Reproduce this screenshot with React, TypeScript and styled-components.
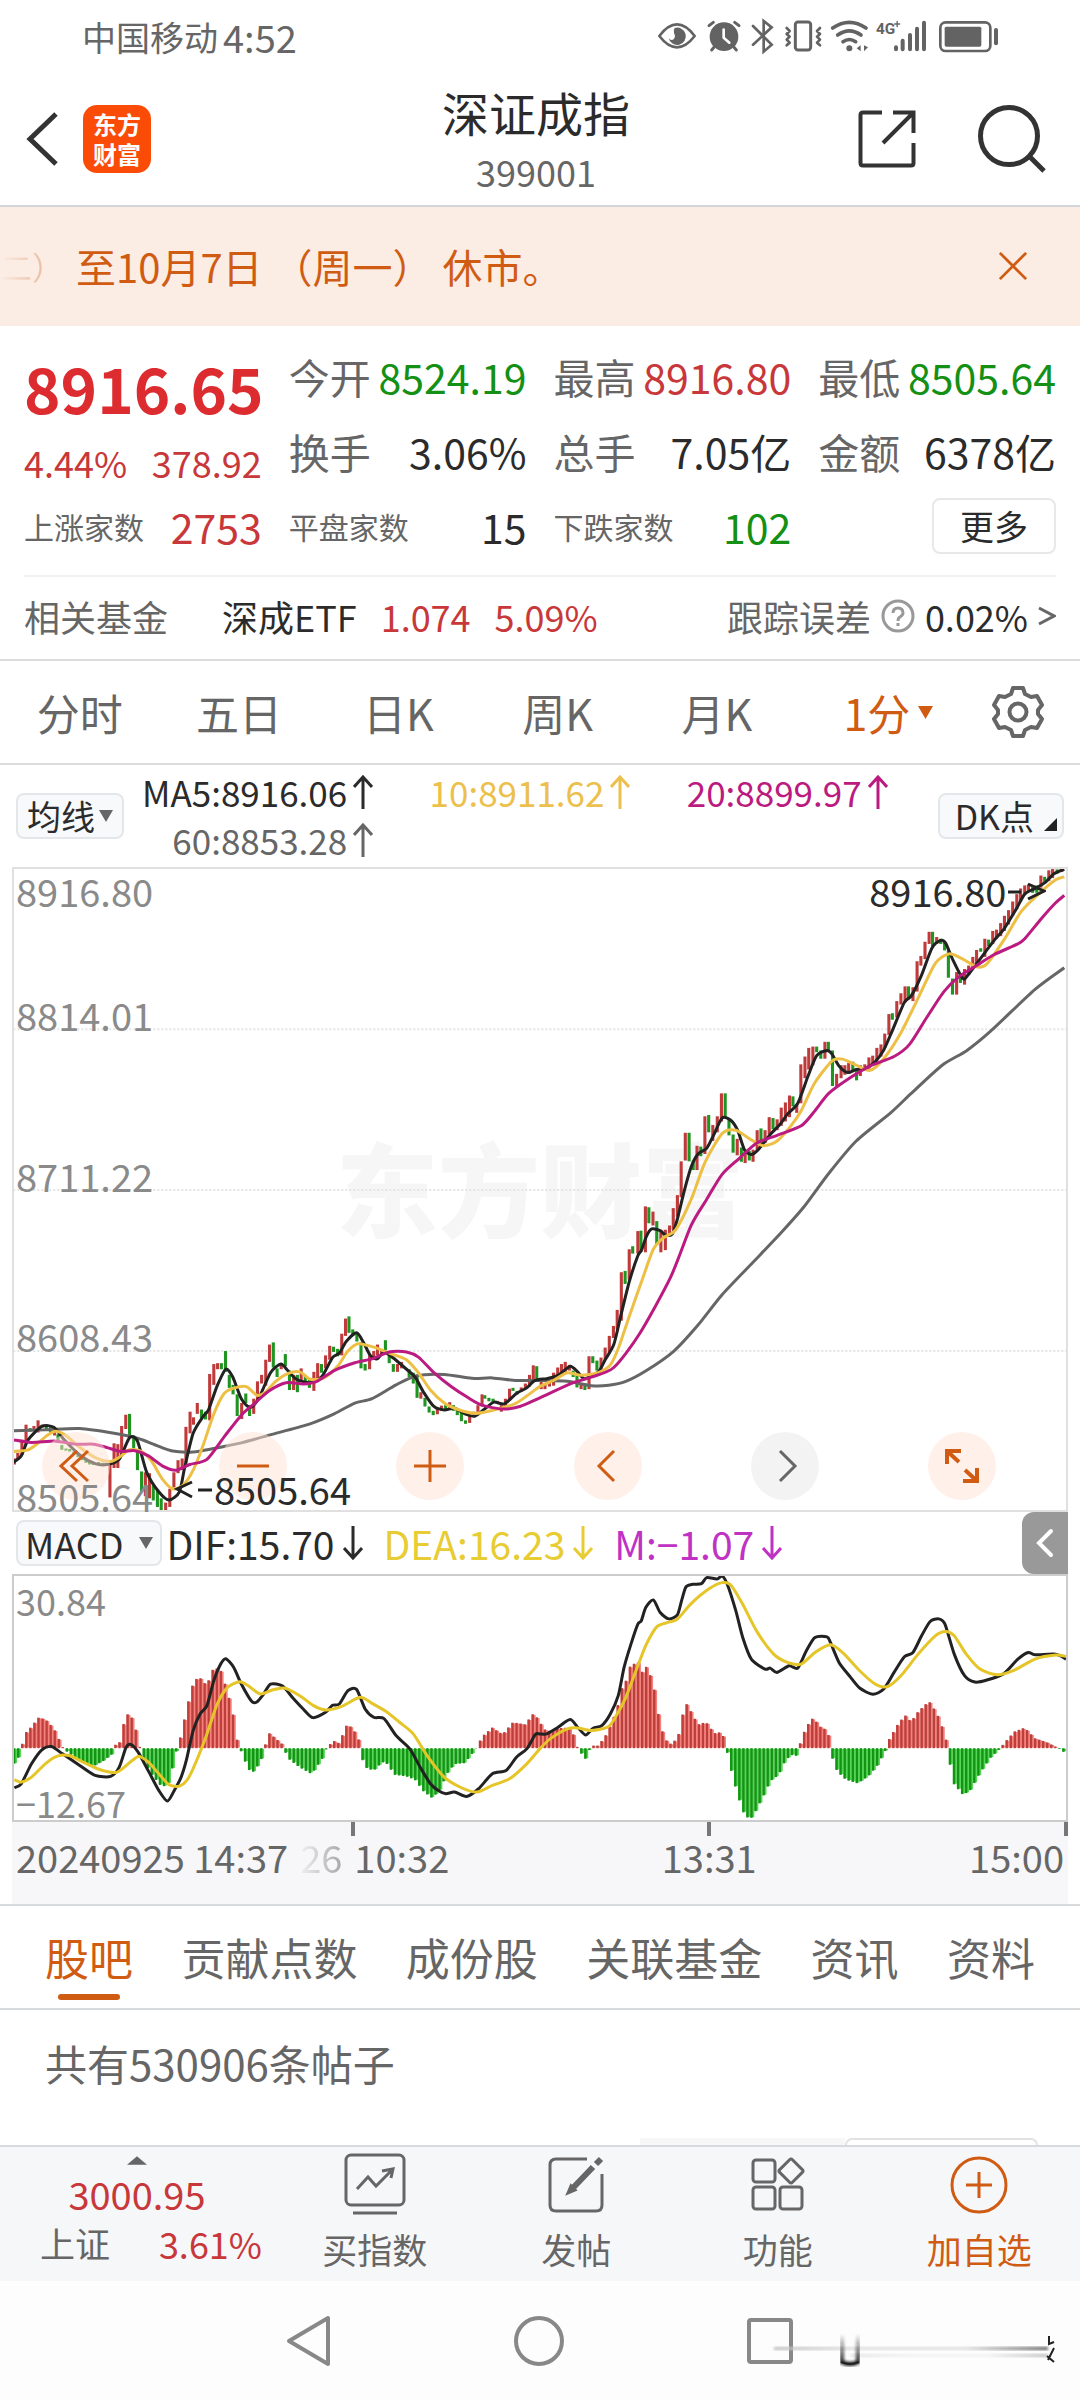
import React from 'react';
import styled, { createGlobalStyle } from 'styled-components';

const GREY = '#666';
const INK = '#2b2b2b';
const RED = '#c8373a';
const GREEN = '#149014';
const ORANGE = '#d05c14';

const GlobalStyle = createGlobalStyle`
  * { box-sizing: border-box; }
  body {
    margin: 0;
    background: #fff;
    color: ${INK};
    font-family: "Noto Sans CJK SC", "Noto Sans", sans-serif;
  }
  button {
    margin: 0;
    padding: 0;
    border: 0;
    background: none;
    color: inherit;
    font: inherit;
    cursor: pointer;
  }
  svg { display: block; }
`;

const Page = styled.div`
  display: flex;
  flex-direction: column;
  min-height: 100vh;
  overflow: hidden;
`;

/* ---------- status bar and header ---------- */

const StatusBar = styled.div`
  display: flex;
  align-items: center;
  justify-content: space-between;
  height: 76px;
  padding: 4px 60px 0 82px;
  color: ${GREY};
`;

const Carrier = styled.div`
  display: flex;
  align-items: center;
  gap: 5px;
  padding-bottom: 8px;
  font-size: 34px;
`;

const Clock = styled.span`
  font-size: 38px;
`;

const Header = styled.header`
  display: grid;
  grid-template-columns: 1fr auto 1fr;
  align-items: center;
  height: 131px;
  padding: 0 34px 4px 26px;
  border-bottom: 2px solid #d2d6da;
`;

const HeaderSide = styled.div<{ $end?: boolean }>`
  display: flex;
  align-items: center;
  justify-content: ${(p) => (p.$end ? 'flex-end' : 'flex-start')};
  gap: ${(p) => (p.$end ? '62px' : '24px')};
`;

const Logo = styled.a`
  display: grid;
  place-content: center;
  width: 68px;
  height: 68px;
  border-radius: 14px;
  background: #fb4c07;
  color: #fff;
  font-size: 24px;
  font-weight: 700;
  line-height: 30px;
  text-align: center;
  text-decoration: none;
`;

const TitleBlock = styled.div`
  text-align: center;
`;

const Title = styled.h1`
  margin: 0;
  font-size: 47px;
  font-weight: 400;
  line-height: 64px;
`;

const Code = styled.div`
  color: ${GREY};
  font-size: 36px;
  line-height: 54px;
`;

const Banner = styled.div`
  display: flex;
  align-items: center;
  justify-content: space-between;
  height: 119px;
  padding: 0 52px 2px 0;
  background: #fbede4;
  color: ${ORANGE};
`;

const Notice = styled.p`
  display: flex;
  gap: 10px;
  margin: 0;
  font-size: 40px;
  line-height: 60px;
  white-space: nowrap;
`;

const Fading = styled.span`
  width: 66px;
  background: linear-gradient(90deg, #fbede4, #e0a684);
  background-clip: text;
  -webkit-background-clip: text;
  color: transparent;
  font-size: 32px;
`;

/* ---------- quote ---------- */

const Quote = styled.section`
  padding: 12px 24px 0;
`;

const QuoteGrid = styled.div`
  display: grid;
  grid-template-columns: repeat(4, minmax(0, 1fr));
  grid-auto-rows: 75px;
  column-gap: 27px;
`;

const PriceCell = styled.div`
  grid-row: span 2;
  color: ${RED};
`;

const Price = styled.div`
  color: #dc2c2f;
  font-size: 62px;
  font-weight: 700;
  line-height: 98px;
`;

const Change = styled.div`
  display: flex;
  justify-content: space-between;
  font-size: 36px;
  line-height: 52px;
`;

const Cell = styled.div<{ $tone?: string }>`
  display: flex;
  align-items: center;
  justify-content: space-between;
  font-size: 41px;
  white-space: nowrap;
  color: ${(p) => p.$tone || INK};
`;

const CellLabel = styled.span<{ $small?: boolean }>`
  color: ${GREY};
  font-size: ${(p) => (p.$small ? '30px' : '41px')};
`;

const MoreButton = styled.button`
  width: 124px;
  height: 56px;
  margin-left: auto;
  border: 2px solid #e8e8e8;
  border-radius: 8px;
  font-size: 34px;
  line-height: 48px;
`;

const FundRow = styled.div`
  display: flex;
  align-items: center;
  height: 84px;
  margin-top: 12px;
  padding-bottom: 4px;
  border-top: 2px solid #f1f1f1;
  font-size: 36px;
  white-space: nowrap;
`;

const FundLabel = styled.span`
  color: ${GREY};
`;

const FundLink = styled.a`
  display: flex;
  gap: 24px;
  margin-left: 54px;
  color: ${INK};
  text-decoration: none;
`;

const RedText = styled.span`
  color: ${RED};
`;

const Tracking = styled.div`
  display: flex;
  align-items: center;
  gap: 10px;
  margin-left: auto;
`;

/* ---------- period tabs ---------- */

const PeriodBar = styled.nav`
  display: grid;
  grid-template-columns: repeat(6, 1fr) 124px;
  align-items: center;
  height: 106px;
  border-top: 2px solid #dcdcdc;
  border-bottom: 2px solid #dcdcdc;
`;

const PeriodTab = styled.button<{ $active?: boolean }>`
  display: flex;
  align-items: center;
  justify-content: center;
  gap: 8px;
  padding-left: ${(p) => (p.$active ? '24px' : '0')};
  color: ${(p) => (p.$active ? ORANGE : GREY)};
  font-size: 43px;
  line-height: 64px;
`;

const IconButton = styled.button`
  display: grid;
  place-items: center;
`;

/* ---------- indicators ---------- */

const AverageBar = styled.div`
  display: flex;
  align-items: center;
  justify-content: space-between;
  height: 102px;
  padding: 0 16px;
`;

const Chip = styled.button<{ $wide?: boolean }>`
  display: flex;
  align-items: center;
  justify-content: center;
  gap: ${(p) => (p.$wide ? '16px' : '4px')};
  height: 46px;
  padding: 0 ${(p) => (p.$wide ? '7px' : '9px')};
  border: 2px solid #e4e7ea;
  border-radius: 8px;
  background: #f7f9fa;
  font-size: ${(p) => (p.$wide ? '36px' : '34px')};
  line-height: 42px;
  white-space: nowrap;
`;

const CornerChip = styled(Chip)`
  gap: 10px;
  padding: 0 5px 0 15px;
  svg { align-self: flex-end; margin-bottom: 6px; }
`;

const Averages = styled.div`
  display: grid;
  grid-template-columns: repeat(3, 1fr);
  flex: 1;
  margin: 0 50px 0 -8px;
`;

const Reading = styled.span<{ $tone: string }>`
  display: flex;
  align-items: center;
  justify-content: flex-end;
  gap: 6px;
  color: ${(p) => p.$tone};
  font-size: 35px;
  line-height: 48px;
  white-space: nowrap;
`;

const MacdBar = styled.div`
  display: flex;
  align-items: center;
  gap: 4px;
  height: 62px;
  padding-left: 16px;
  margin-right: 12px;
`;

const MacdReadings = styled.div`
  display: flex;
  gap: 21px;
`;

const MacdReading = styled(Reading)`
  gap: 8px;
  font-size: 39px;
`;

const Drawer = styled.button`
  display: grid;
  place-items: center;
  width: 46px;
  height: 62px;
  margin-left: auto;
  border-radius: 12px 0 0 12px;
  background: #999;
`;

/* ---------- charts ---------- */

const Plot = styled.div<{ $height: number; $line: string }>`
  position: relative;
  height: ${(p) => p.$height}px;
  margin: 0 12px;
  border: 2px solid ${(p) => p.$line};
  & > svg { position: relative; width: 100%; height: 100%; }
`;

const Watermark = styled.div`
  position: absolute;
  inset: 0;
  display: grid;
  place-items: center;
  padding-bottom: 8px;
  color: #f6f6f6;
  font-size: 102px;
  font-weight: 900;
`;

const Scale = styled.div`
  position: absolute;
  inset: 0;
  display: grid;
  grid-template-rows: repeat(4, 1fr);
  padding-left: 2px;
  color: #8a8a8a;
  font-size: 38px;
  line-height: 28px;
`;

const ScaleMark = styled.span<{ $row: number }>`
  grid-row: ${(p) => Math.max(p.$row, 1)};
  grid-column: 1;
  align-self: ${(p) => (p.$row ? 'end' : 'start')};
  padding-top: ${(p) => (p.$row ? '0' : '8px')};
`;

const MacdScale = styled(Scale)`
  display: flex;
  flex-direction: column;
  justify-content: space-between;
  padding: 6px 0 0 2px;
  font-size: 36px;
  line-height: 36px;
`;

const Callout = styled.div<{ $x: string; $y: string }>`
  position: absolute;
  left: ${(p) => p.$x};
  top: ${(p) => p.$y};
  display: flex;
  align-items: center;
  color: ${INK};
  font-size: 38px;
  line-height: 40px;
`;

const Controls = styled.div`
  position: absolute;
  left: 28px;
  right: 70px;
  bottom: 10px;
  display: flex;
  justify-content: space-between;
`;

const RoundButton = styled.button<{ $muted?: boolean }>`
  display: grid;
  place-items: center;
  width: 68px;
  height: 68px;
  border-radius: 50%;
  background: ${(p) => (p.$muted ? 'rgba(235,235,235,.6)' : 'rgba(255,226,212,.5)')};
`;

const TimeAxis = styled.div`
  display: grid;
  grid-template-columns: 1fr 1fr 1fr;
  align-content: start;
  height: 82px;
  margin: 0 12px;
  background: #f7f7f9;
  color: ${GREY};
  font-size: 38px;
  line-height: 42px;
`;

const Ticks = styled.div`
  grid-column: 1 / -1;
  display: grid;
  grid-template-columns: 343px 356px 1fr;
  height: 14px;
`;

const Tick = styled.i`
  border-right: 4px solid #777;
`;

const AxisLabel = styled.time<{ $align: string }>`
  display: flex;
  gap: 12px;
  padding: 0 4px;
  justify-content: ${(p) => p.$align};
  white-space: nowrap;
`;

const AxisFade = styled.span`
  background: linear-gradient(90deg, #f0f0f2, #a8a8a8);
  background-clip: text;
  -webkit-background-clip: text;
  color: transparent;
`;

/* ---------- community ---------- */

const SectionTabs = styled.nav`
  display: flex;
  justify-content: space-between;
  height: 106px;
  padding: 0 45px;
  border-top: 2px solid #d6dadd;
  border-bottom: 2px solid #d6dadd;
`;

const SectionTab = styled.button<{ $active?: boolean }>`
  position: relative;
  color: ${(p) => (p.$active ? ORANGE : GREY)};
  font-size: 44px;
  &::after {
    content: '';
    display: ${(p) => (p.$active ? 'block' : 'none')};
    position: absolute;
    left: 15%;
    right: 15%;
    bottom: 8px;
    height: 6px;
    border-radius: 3px;
    background: ${ORANGE};
  }
`;

const Posts = styled.main`
  display: flex;
  flex-direction: column;
  justify-content: space-between;
  height: 135px;
  padding-left: 45px;
`;

const PostCount = styled.p`
  margin: 0;
  color: ${GREY};
  font-size: 42px;
  line-height: 106px;
`;

const Peek = styled.div`
  display: grid;
  grid-template-columns: 205px 193px;
  justify-content: end;
  height: 7px;
  padding-right: 42px;
`;

const PeekBack = styled.div`
  background: #f7f7f7;
`;

const PeekCard = styled.div`
  border: 2px solid #e2e2e2;
  border-bottom: 0;
  border-radius: 10px 10px 0 0;
`;

/* ---------- bottom bars ---------- */

const ActionBar = styled.footer`
  display: grid;
  grid-template-columns: 274px repeat(4, 1fr);
  height: 136px;
  border-top: 2px solid #d8dbde;
  background: #f6f7f9;
`;

const IndexTicker = styled.button`
  display: flex;
  flex-direction: column;
  justify-content: flex-start;
  padding: 2px 12px 0 40px;
  color: ${RED};
`;

const IndexHead = styled.span`
  display: flex;
  flex-direction: column;
  align-items: center;
  width: 194px;
  font-size: 38px;
  line-height: 50px;
`;

const IndexRow = styled.span`
  display: flex;
  align-items: center;
  justify-content: space-between;
  align-self: stretch;
  font-size: 36px;
  line-height: 48px;
`;

const IndexName = styled.span`
  color: ${GREY};
  font-size: 35px;
`;

const Action = styled.button<{ $accent?: boolean }>`
  display: flex;
  flex-direction: column;
  align-items: center;
  justify-content: flex-start;
  gap: 8px;
  padding-top: 5px;
  color: ${(p) => (p.$accent ? ORANGE : GREY)};
  font-size: 35px;
  line-height: 50px;
`;

const SystemBar = styled.div`
  position: relative;
  display: flex;
  flex: 1;
  align-items: center;
  justify-content: space-between;
  min-height: 118px;
  padding: 0 286px 0 284px;
  background: #fdfdfd;
`;

const Smudge = styled.svg`
  position: absolute;
  right: 20px;
  bottom: 16px;
`;

/* ---------- chart data, in plot units (3063 wide) ---------- */

type Pt = [number, number];

const pts = (left: string, right: string): Pt[] => {
  const read = (s: string, dx: number): Pt[] =>
    s.split(' ').map((p) => {
      const [x, y] = p.split(',').map(Number);
      return [x + dx, y];
    });
  return [...read(left, 0), ...read(right, 1568)];
};

const smooth = (p: Pt[]) => {
  let d = `M${p[0][0]},${p[0][1]}`;
  for (let i = 0; i < p.length - 1; i++) {
    const a = p[Math.max(i - 1, 0)];
    const b = p[i];
    const c = p[i + 1];
    const e = p[Math.min(i + 2, p.length - 1)];
    d += `C${b[0] + (c[0] - a[0]) / 8},${b[1] + (c[1] - a[1]) / 8} ${c[0] - (e[0] - b[0]) / 8},${c[1] - (e[1] - b[1]) / 8} ${c[0]},${c[1]}`;
  }
  return d;
};

const MA5 = pts(
  '37,1387 60,1372 80,1335 120,1304 155,1306 185,1335 230,1370 275,1390 310,1392 345,1380 375,1330 398,1338 425,1410 460,1455 490,1474 520,1455 535,1400 560,1320 590,1280 605,1265 630,1210 655,1172 675,1190 700,1240 725,1260 750,1240 785,1180 815,1160 835,1175 860,1195 900,1203 935,1188 965,1145 985,1135 1005,1108 1035,1088 1055,1110 1075,1140 1095,1148 1115,1132 1140,1145 1170,1165 1205,1190 1230,1225 1260,1258 1290,1266 1320,1262 1350,1275 1380,1280 1410,1262 1435,1248 1465,1252 1500,1228 1530,1215 1550,1200 1568,1195',
  '20,1194 55,1185 88,1165 110,1178 130,1194 170,1178 190,1150 215,1115 235,1050 260,970 285,910 295,898 310,865 325,848 350,852 365,862 385,860 400,825 420,760 440,705 460,675 485,662 505,632 530,592 555,597 575,620 595,665 615,676 635,665 670,630 700,605 720,583 750,558 780,495 805,448 835,436 850,445 870,472 895,487 920,480 945,478 975,462 1000,435 1025,390 1060,325 1080,310 1110,262 1140,200 1165,182 1180,188 1200,225 1230,270 1245,262 1280,225 1320,183 1350,155 1385,110 1410,75 1440,62 1470,48 1495,28 1525,18',
);
const MA10 = pts(
  '37,1362 80,1358 110,1342 135,1325 160,1315 190,1325 230,1352 280,1378 320,1385 345,1375 375,1358 410,1362 440,1385 470,1425 500,1448 530,1440 560,1405 590,1345 620,1275 650,1228 680,1215 715,1212 745,1232 770,1225 800,1200 835,1182 870,1178 900,1195 940,1192 980,1165 1010,1130 1040,1113 1090,1122 1130,1135 1180,1150 1215,1180 1250,1220 1290,1250 1330,1265 1380,1274 1440,1265 1500,1250',
  '0,1212 40,1198 80,1180 120,1186 170,1180 205,1162 230,1120 260,1050 300,960 330,895 360,868 395,850 440,780 480,695 530,628 570,620 610,640 650,656 690,645 730,610 760,575 800,510 850,460 880,456 920,470 960,482 1000,455 1050,395 1100,315 1150,235 1190,213 1230,225 1270,243 1300,236 1350,180 1400,115 1450,75 1500,42 1525,35',
);
const MA20 = pts(
  '37,1335 90,1341 160,1338 220,1345 270,1345 310,1353 350,1362 390,1360 430,1372 470,1395 510,1405 550,1392 600,1380 650,1328 700,1278 740,1250 780,1222 830,1203 880,1206 920,1200 970,1175 1030,1157 1080,1148 1130,1132 1180,1132 1215,1144 1260,1180 1310,1212 1360,1238 1400,1255 1460,1264 1510,1258',
  '0,1238 90,1205 150,1190 215,1168 290,1090 380,960 440,840 485,780 530,722 580,685 630,650 690,632 760,610 800,575 840,535 900,500 960,472 1030,450 1075,422 1125,360 1175,300 1220,265 1270,240 1320,215 1390,190 1410,178 1460,130 1500,95 1525,78',
);
const MA60 = pts(
  '37,1314 130,1312 230,1309 330,1320 400,1332 450,1347 500,1361 560,1363 620,1355 700,1342 800,1320 900,1298 970,1275 1030,1250 1080,1240 1150,1208 1210,1187 1290,1184 1370,1193 1430,1192 1500,1198',
  '0,1198 80,1200 150,1210 200,1209 250,1200 310,1175 390,1130 460,1070 530,1000 620,925 700,858 770,795 840,720 920,645 1020,580 1080,535 1170,470 1240,437 1310,392 1440,295 1525,245',
);

/* each candle: centre, top, bottom, r(ise) or g (fall) */
const CANDLES_AM =
  '40,1378,1392,r 50,1365,1380,r 62,1335,1370,r 74,1300,1345,r 86,1308,1316,g 97,1303,1312,r 109,1290,1318,r 121,1300,1306,r 133,1305,1312,g 145,1304,1318,g 157,1310,1325,r 167,1322,1340,g 178,1347,1358,g 190,1355,1360,g 201,1356,1362,g 213,1362,1368,g 225,1366,1375,g 237,1374,1382,g 248,1380,1388,g 259,1384,1392,g 270,1386,1393,g 285,1386,1392,g 297,1388,1395,g 307,1388,1395,r 318,1390,1468,r 330,1343,1400,r 341,1345,1400,r 352,1303,1372,r 364,1277,1310,r 375,1275,1325,g 387,1325,1355,g 398,1358,1405,g 410,1408,1455,g 421,1410,1465,r 433,1412,1470,r 444,1440,1475,g 456,1450,1490,g 467,1470,1500,g 480,1480,1500,r 492,1448,1490,r 504,1410,1445,r 516,1382,1412,r 528,1378,1405,r 539,1305,1388,r 551,1270,1320,r 561,1283,1300,r 572,1250,1275,r 584,1265,1285,g 596,1270,1288,g 608,1183,1290,r 620,1160,1208,r 631,1158,1172,r 642,1158,1172,g 654,1130,1178,g 665,1185,1215,g 676,1208,1230,g 688,1230,1280,g 701,1250,1287,r 713,1228,1250,g 724,1255,1280,g 736,1240,1275,r 747,1200,1245,r 759,1185,1205,r 771,1150,1210,r 782,1115,1155,r 793,1110,1168,g 804,1170,1190,g 816,1158,1172,r 828,1137,1165,g 840,1175,1220,g 852,1185,1220,r 863,1185,1225,g 874,1170,1200,r 886,1185,1205,g 898,1195,1215,g 911,1178,1222,r 922,1158,1195,r 933,1160,1180,g 945,1140,1170,r 957,1118,1150,r 968,1120,1132,g 980,1125,1142,g 992,1090,1140,r 1003,1055,1095,r 1013,1050,1088,g 1024,1080,1095,g 1036,1088,1108,g 1048,1110,1170,g 1060,1160,1175,g 1073,1140,1172,r 1085,1130,1145,r 1096,1115,1140,r 1108,1128,1140,r 1119,1105,1128,g 1130,1130,1158,g 1142,1160,1178,g 1154,1160,1178,r 1166,1155,1170,r 1188,1172,1190,g 1200,1180,1205,g 1211,1185,1238,g 1222,1225,1240,r 1234,1238,1258,g 1246,1258,1272,g 1258,1268,1278,g 1270,1262,1276,r 1282,1256,1268,r 1294,1255,1268,g 1306,1248,1262,r 1317,1255,1268,g 1328,1262,1278,g 1340,1270,1292,g 1352,1290,1298,g 1364,1280,1296,r 1376,1270,1282,r 1388,1255,1275,r 1400,1230,1258,r 1408,1232,1240,g 1420,1238,1246,g 1432,1240,1250,g 1444,1245,1252,r 1456,1255,1270,r 1468,1240,1256,r 1480,1217,1245,r 1490,1215,1222,g 1502,1222,1230,g 1514,1214,1224,r 1526,1205,1218,r 1538,1185,1212,r 1549,1163,1202,r 1559,1165,1198,g';
const CANDLES_PM =
  '4,1194,1218,r 15,1205,1218,r 28,1200,1212,r 40,1180,1210,r 52,1168,1190,r 63,1160,1182,r 74,1155,1178,r 86,1162,1175,r 97,1175,1190,g 108,1180,1214,g 120,1208,1218,r 131,1205,1220,g 143,1142,1218,r 154,1142,1158,g 166,1152,1175,g 178,1145,1172,r 190,1122,1150,r 202,1095,1135,r 214,1072,1100,r 225,1035,1080,r 237,948,1060,r 248,945,975,g 260,895,965,r 270,888,905,g 285,853,905,r 294,852,900,g 307,796,902,r 317,798,835,g 329,808,840,r 340,830,885,g 352,850,902,r 365,850,897,r 377,840,865,r 388,800,850,r 400,770,820,r 411,692,775,r 423,626,690,r 434,626,692,g 446,690,712,g 457,656,712,r 468,658,680,g 480,588,675,r 491,585,625,g 503,608,645,r 516,588,625,r 528,535,600,r 539,535,590,g 550,595,632,g 562,630,672,g 574,640,678,r 586,660,693,g 597,665,696,r 609,668,690,g 620,665,693,r 632,620,665,r 643,616,655,g 655,620,650,r 667,590,630,r 678,592,618,g 690,595,620,r 702,568,610,r 714,556,600,r 726,540,590,r 736,542,565,g 747,560,580,r 759,468,558,r 771,450,500,r 782,430,480,r 794,427,470,r 805,427,440,g 817,436,455,g 829,416,455,r 839,416,440,g 851,436,518,g 863,490,518,r 876,470,500,r 887,470,492,r 898,465,490,r 910,462,485,g 921,480,505,g 932,470,495,r 945,468,482,r 957,452,478,r 968,448,470,r 980,430,462,r 992,422,450,r 1003,397,430,r 1015,352,400,r 1025,350,365,g 1038,322,360,r 1050,304,330,r 1062,288,325,r 1072,288,318,g 1085,290,322,r 1097,230,300,r 1108,218,240,r 1120,185,225,r 1132,162,190,r 1142,162,195,g 1154,174,190,r 1166,178,190,g 1177,185,205,g 1188,205,268,g 1200,270,307,g 1212,255,307,r 1223,258,280,g 1235,248,284,r 1247,240,262,r 1259,220,245,r 1270,204,240,r 1282,200,208,g 1294,178,220,r 1305,180,195,g 1317,160,190,r 1328,157,178,r 1340,142,172,r 1351,125,160,r 1363,112,145,r 1375,92,125,r 1387,75,110,r 1398,62,90,r 1410,55,75,r 1421,53,68,r 1433,58,72,g 1445,55,72,g 1457,32,60,r 1468,35,48,g 1480,20,45,r 1491,15,38,r 1504,18,28,g 1516,16,24,r';

const candles = [CANDLES_AM, CANDLES_PM].flatMap((half, i) =>
  half.split(' ').map((c) => {
    const [x, top, bottom, dir] = c.split(',');
    return { x: Number(x) + i * 1568, top: Number(top), bottom: Number(bottom), up: dir === 'r' };
  }),
);

const DIF = pts(
  '40,862 60,850 90,790 120,748 148,738 180,760 230,795 275,825 320,828 345,800 365,740 380,732 400,755 430,812 460,870 485,902 505,870 525,830 540,780 560,690 580,640 600,615 620,540 640,490 655,474 678,500 700,550 730,602 745,604 765,580 785,550 820,556 850,592 880,625 908,651 945,635 965,614 985,610 1010,570 1035,566 1060,625 1085,650 1115,654 1150,705 1190,745 1220,800 1250,850 1275,872 1295,880 1320,875 1355,888 1390,865 1430,820 1470,810 1500,770 1530,745 1555,702 1568,700',
  '20,700 50,682 88,657 110,680 133,703 155,683 180,675 205,640 228,585 245,500 265,430 285,370 295,360 308,320 330,297 350,335 375,354 400,342 412,300 425,258 445,250 470,248 485,230 515,234 530,225 545,250 570,330 590,410 615,475 655,505 670,502 690,515 725,495 750,502 775,450 800,410 835,408 845,425 870,485 900,525 930,562 968,581 1000,565 1030,515 1060,468 1085,455 1110,405 1135,362 1160,354 1178,370 1205,460 1235,525 1265,544 1300,538 1350,518 1390,475 1420,455 1440,462 1500,460 1530,475',
);
const DEA = pts(
  '40,838 60,845 90,830 130,790 165,767 200,765 240,785 290,808 335,816 360,800 400,768 430,785 460,820 490,853 520,857 545,835 570,780 600,700 630,610 660,560 695,543 720,555 755,580 790,568 825,562 870,585 910,615 945,628 990,618 1045,590 1080,608 1120,632 1160,665 1200,700 1240,765 1290,830 1340,862 1385,875 1430,855 1480,835 1530,790',
  '0,745 30,715 80,685 110,682 150,690 200,678 225,640 250,590 285,495 310,430 340,378 375,364 400,355 440,308 490,265 530,245 555,252 590,310 630,390 680,460 720,485 760,490 800,455 845,432 880,455 930,510 975,550 1010,558 1050,525 1100,460 1150,405 1180,392 1205,405 1240,460 1280,505 1330,522 1380,508 1440,475 1500,463 1530,467',
);
const HIST = pts(
  '37,-50 50,-35 60,0 72,45 90,65 110,92 130,88 155,60 180,5 190,-8 230,-40 270,-55 300,-38 325,-18 335,12 345,12 355,60 365,102 378,102 390,70 402,20 412,-30 440,-80 470,-118 490,-105 505,-35 515,5 528,50 540,115 560,195 575,215 590,205 600,180 610,225 622,243 640,235 660,170 680,85 690,10 700,-10 715,-50 728,-75 740,-68 760,-30 768,5 782,45 800,30 820,12 835,-30 870,-58 905,-78 940,-25 950,5 970,22 985,15 1005,68 1020,65 1040,35 1050,-30 1065,-60 1085,-68 1110,-42 1125,-48 1145,-80 1180,-85 1205,-95 1230,-130 1255,-150 1275,-130 1300,-75 1320,-48 1350,-45 1375,-12 1385,2 1400,35 1430,62 1460,42 1490,78 1525,72 1550,105 1566,85',
  '5,70 20,50 50,60 85,62 100,38 110,2 120,-15 133,-32 145,-5 155,8 170,8 190,35 210,80 225,120 240,185 255,210 262,245 285,262 295,225 308,248 320,225 335,170 350,70 365,28 378,12 395,25 405,45 423,140 435,120 450,90 468,65 480,85 495,62 515,40 528,55 540,15 550,-40 570,-120 590,-190 610,-216 620,-205 650,-145 670,-100 695,-80 715,-35 735,-20 752,-25 758,20 775,65 795,92 820,60 832,58 843,32 852,-35 865,-70 890,-95 925,-106 955,-85 980,-55 1005,-8 1015,25 1040,70 1062,100 1080,80 1100,110 1132,142 1155,105 1170,65 1180,35 1190,-30 1202,-105 1230,-140 1250,-130 1280,-75 1310,-30 1335,-5 1350,15 1380,50 1410,62 1440,30 1475,18 1500,5 1515,-5 1535,-20',
);

const BAR = 11.78;
const bars = Array.from({ length: 260 }, (_, i) => {
  const x = 40 + i * BAR;
  let k = HIST.findIndex((p) => p[0] >= x);
  if (k < 1) k = 1;
  const [x0, y0] = HIST[k - 1];
  const [x1, y1] = HIST[k];
  return { x, h: y0 + ((y1 - y0) * (x - x0)) / (x1 - x0) };
});

/* ---------- drawings ---------- */

const Curve = ({ p, color }: { p: Pt[]; color: string }) => (
  <path d={smooth(p)} fill="none" stroke={color} strokeWidth={3} strokeLinejoin="round" vectorEffect="non-scaling-stroke" />
);

const PriceChart = () => (
  <svg viewBox="39 17 3059 1480" preserveAspectRatio="none" aria-label="1分K线">
    {[387, 758, 1130].map((y) => (
      <path key={y} d={`M37,${y}H3100`} stroke="#e4e4e4" strokeWidth={2} strokeDasharray="2 2" vectorEffect="non-scaling-stroke" />
    ))}
    {candles.map((c) => (
      <rect key={c.x} x={c.x - 4.5} y={c.top} width={9} height={c.bottom - c.top} fill={c.up ? '#bf3a3a' : '#1f9421'} />
    ))}
    <Curve p={MA60} color="#666" />
    <Curve p={MA5} color="#222" />
    <Curve p={MA10} color="#eebf45" />
    <Curve p={MA20} color="#bb1a80" />
  </svg>
);

const MacdChart = () => (
  <svg viewBox="39 225 3059 734" preserveAspectRatio="none" aria-label="MACD">
    {bars.map((b) => {
      const y = b.h > 0 ? 743 - b.h : 743;
      const h = Math.abs(b.h);
      return (
        <g key={b.x}>
          <rect x={b.x - 4} y={y + 2} width={BAR} height={Math.max(h - 4, 0)} fill={b.h > 0 ? '#f4817c' : '#56d656'} />
          <rect x={b.x - 4} y={y} width={7} height={h} fill={b.h > 0 ? '#bd3f3b' : '#149414'} />
        </g>
      );
    })}
    <Curve p={DIF} color="#222" />
    <Curve p={DEA} color="#e5c528" />
  </svg>
);

const StatusIcons = () => (
  <svg width="380" height="60" viewBox="0 0 1140 180" fill="none" stroke="#636363" strokeWidth="9" strokeLinecap="round" strokeLinejoin="round">
    <path d="M58 78Q84 43 111 43Q138 43 164 78Q138 112 111 112Q84 112 58 78Z" strokeWidth="8" />
    <path d="M104 54A26 26 0 1 1 86 84Q92 94 101 88Q108 80 102 70Q99 61 104 54Z" fill="#636363" stroke="none" />
    <circle cx="252" cy="80" r="43" fill="#636363" stroke="none" />
    <path d="M207 47L220 37M297 47L284 37M222 112L215 120M282 112L289 120" />
    <path d="M251 59V83L268 98" stroke="#fff" strokeWidth="8" />
    <path d="M339 48L395 104L371 125V33L395 52L339 104" strokeWidth="8" strokeLinejoin="miter" />
    <rect x="466" y="36" width="46" height="84" rx="8" strokeWidth="9" />
    <path d="M440 54L449 63L440 72L449 80L440 89L449 98L440 106M540 54L531 63L540 72L531 80L540 89L531 98L540 106" strokeWidth="8" />
    <path d="M578 54Q628 20 678 54M593 75Q628 50 663 75M609 95Q628 82 647 95" strokeWidth="11" />
    <circle cx="628" cy="115" r="9" fill="#636363" stroke="none" />
    <path d="M662 106V124L650 115ZM672 106V124L684 112Z" fill="#636363" stroke="none" />
    <text x="708" y="71" fill="#636363" stroke="none" fontFamily="Roboto, sans-serif" fontSize="46" fontWeight="700">4G</text>
    <path d="M764 42H779M771.500 34V50" strokeWidth="4" />
    <path d="M768 112V118M788 92V118M810 75V118M831 56V118M852 38V118" strokeWidth="12" />
    <rect x="901" y="37" width="150" height="86" rx="16" strokeWidth="8" />
    <rect x="914" y="50" width="110" height="60" rx="5" fill="#636363" stroke="none" />
    <path d="M1068 60V100" strokeWidth="12" />
  </svg>
);

const Arrow = ({ up }: { up?: boolean }) => (
  <svg width="20" height="34" viewBox="0 0 20 34" fill="none" stroke="currentColor" strokeWidth="3">
    <path d={up ? 'M10 34V3M1 12L10 2L19 12' : 'M10 0V31M1 22L10 32L19 22'} />
  </svg>
);

const Caret = ({ size = 14, up, color = GREY }: { size?: number; up?: boolean; color?: string }) => (
  <svg width={size} height={size} viewBox="0 0 14 14" fill={color}>
    <path d={up ? 'M0 11L7 5L14 11Z' : 'M0 1H14L7 13Z'} />
  </svg>
);

const periods = ['分时', '五日', '日K', '周K', '月K'];
const sections = ['股吧', '贡献点数', '成份股', '关联基金', '资讯', '资料'];
const prices = ['8916.80', '8814.01', '8711.22', '8608.43', '8505.64'];

export default function App() {
  return (
    <>
      <GlobalStyle />
      <Page>
        <StatusBar>
          <Carrier>
            中国移动<Clock>4:52</Clock>
          </Carrier>
          <StatusIcons />
        </StatusBar>

        <Header>
          <HeaderSide>
            <IconButton aria-label="返回">
              <svg width="33" height="54" viewBox="0 0 33 54" fill="none" stroke="#333" strokeWidth="5">
                <path d="M30 2L4 27L30 52" />
              </svg>
            </IconButton>
            <Logo href="#home">东方<br />财富</Logo>
          </HeaderSide>
          <TitleBlock>
            <Title>深证成指</Title>
            <Code>399001</Code>
          </TitleBlock>
          <HeaderSide $end>
            <IconButton aria-label="分享">
              <svg width="58" height="58" viewBox="0 0 58 58" fill="none" stroke="#333" strokeWidth="4">
                <path d="M24 2.500H5Q2.500 2.500 2.500 5V53Q2.500 55.500 5 55.500H53Q55.500 55.500 55.500 53V33M35 2.500H55.500V23M55 3L25 33" />
              </svg>
            </IconButton>
            <IconButton aria-label="搜索">
              <svg width="68" height="68" viewBox="0 0 68 68" fill="none" stroke="#333" strokeWidth="5">
                <circle cx="31" cy="31" r="28.500" />
                <path d="M51 51L66 66" />
              </svg>
            </IconButton>
          </HeaderSide>
        </Header>

        <Banner>
          <Notice>
            <Fading>二）</Fading>
            <span>至10月7日</span>
            <span>（周一）</span>
            <span>休市。</span>
          </Notice>
          <IconButton aria-label="关闭">
            <svg width="30" height="30" viewBox="0 0 32 32" stroke="currentColor" strokeWidth="3">
              <path d="M2 2L30 30M30 2L2 30" />
            </svg>
          </IconButton>
        </Banner>

        <Quote>
          <QuoteGrid>
            <PriceCell>
              <Price>8916.65</Price>
              <Change>
                <span>4.44%</span>
                <span>378.92</span>
              </Change>
            </PriceCell>
            <Cell $tone={GREEN}><CellLabel>今开</CellLabel>8524.19</Cell>
            <Cell $tone={RED}><CellLabel>最高</CellLabel>8916.80</Cell>
            <Cell $tone={GREEN}><CellLabel>最低</CellLabel>8505.64</Cell>
            <Cell><CellLabel>换手</CellLabel>3.06%</Cell>
            <Cell><CellLabel>总手</CellLabel>7.05亿</Cell>
            <Cell><CellLabel>金额</CellLabel>6378亿</Cell>
            <Cell $tone={RED}><CellLabel $small>上涨家数</CellLabel>2753</Cell>
            <Cell><CellLabel $small>平盘家数</CellLabel>15</Cell>
            <Cell $tone={GREEN}><CellLabel $small>下跌家数</CellLabel>102</Cell>
            <Cell><MoreButton>更多</MoreButton></Cell>
          </QuoteGrid>
          <FundRow>
            <FundLabel>相关基金</FundLabel>
            <FundLink href="#fund">
              深成ETF
              <RedText>1.074</RedText>
              <RedText>5.09%</RedText>
            </FundLink>
            <Tracking>
              <FundLabel>跟踪误差</FundLabel>
              <svg width="34" height="34" viewBox="0 0 34 34" fill="none" stroke="#999" strokeWidth="3">
                <circle cx="17" cy="17" r="15" />
                <path d="M12 14Q12 9 17 9T22 14Q22 16 19 18Q17 19 17 22M17 24V27" />
              </svg>
              <span>0.02%</span>
              <svg width="18" height="20" viewBox="0 0 18 20" fill="none" stroke="#666" strokeWidth="3">
                <path d="M1 2L16 10L1 18" />
              </svg>
            </Tracking>
          </FundRow>
        </Quote>

        <PeriodBar>
          {periods.map((p) => <PeriodTab key={p}>{p}</PeriodTab>)}
          <PeriodTab $active>1分<Caret size={15} color={ORANGE} /></PeriodTab>
          <IconButton aria-label="设置">
            <svg width="54" height="54" viewBox="0 0 54 54" fill="none" stroke="#666" strokeWidth="4" strokeLinejoin="round">
              <path d="M22 3H32L34 9L40 12L46 11L51 20L47 25V29L51 34L46 43L40 42L34 45L32 51H22L20 45L14 42L8 43L3 34L7 29V25L3 20L8 11L14 12L20 9Z" />
              <circle cx="27" cy="27" r="8.500" />
            </svg>
          </IconButton>
        </PeriodBar>

        <AverageBar>
          <Chip>均线<Caret /></Chip>
          <Averages>
            <Reading $tone={INK}>MA5:8916.06<Arrow up /></Reading>
            <Reading $tone="#ecc04c">10:8911.62<Arrow up /></Reading>
            <Reading $tone="#bb1a80">20:8899.97<Arrow up /></Reading>
            <Reading $tone={GREY}>60:8853.28<Arrow up /></Reading>
          </Averages>
          <CornerChip>
            DK点
            <svg width="13" height="13" viewBox="0 0 13 13" fill="#222"><path d="M13 0V13H0Z" /></svg>
          </CornerChip>
        </AverageBar>

        <Plot $height={645} $line="#e0e0e0">
          <Watermark>东方财富</Watermark>
          <PriceChart />
          <Controls>
            <RoundButton aria-label="最早">
              <svg width="36" height="34" viewBox="0 0 36 34" fill="none" stroke={ORANGE} strokeWidth="3"><path d="M19 2L3 17L19 32M30 2L14 17L30 32" /></svg>
            </RoundButton>
            <RoundButton aria-label="缩小">
              <svg width="34" height="34" viewBox="0 0 34 34" fill="none" stroke={ORANGE} strokeWidth="3"><path d="M1 17H33" /></svg>
            </RoundButton>
            <RoundButton aria-label="放大">
              <svg width="34" height="34" viewBox="0 0 34 34" fill="none" stroke={ORANGE} strokeWidth="3"><path d="M1 17H33M17 1V33" /></svg>
            </RoundButton>
            <RoundButton aria-label="左移">
              <svg width="34" height="34" viewBox="0 0 34 34" fill="none" stroke={ORANGE} strokeWidth="3"><path d="M23 2L8 17L23 32" /></svg>
            </RoundButton>
            <RoundButton aria-label="右移" $muted>
              <svg width="34" height="34" viewBox="0 0 34 34" fill="none" stroke={GREY} strokeWidth="3"><path d="M12 2L27 17L12 32" /></svg>
            </RoundButton>
            <RoundButton aria-label="全屏">
              <svg width="34" height="34" viewBox="0 0 34 34" fill="none" stroke={ORANGE} strokeWidth="4"><path d="M2 15V2H16M2 2L14 13M18 32H32V19M32 32L20 21" /></svg>
            </RoundButton>
          </Controls>
          <Scale>
            {prices.map((v, i) => <ScaleMark key={v} $row={i}>{v}</ScaleMark>)}
          </Scale>
          <Callout $x="81.3%" $y="2px">
            8916.80
            <svg width="40" height="20" viewBox="0 0 40 20" fill="none" stroke="#222" strokeWidth="3"><path d="M2 11H15M22 3L38 10L22 18" /></svg>
          </Callout>
          <Callout $x="15.2%" $y="600px">
            <svg width="40" height="20" viewBox="0 0 40 20" fill="none" stroke="#222" strokeWidth="3"><path d="M18 3L3 10L18 18M24 11H38" /></svg>
            8505.64
          </Callout>
        </Plot>

        <MacdBar>
          <Chip $wide>MACD<Caret /></Chip>
          <MacdReadings>
            <MacdReading $tone={INK}>DIF:15.70<Arrow /></MacdReading>
            <MacdReading $tone="#e8cc34">DEA:16.23<Arrow /></MacdReading>
            <MacdReading $tone="#c032c4">M:−1.07<Arrow /></MacdReading>
          </MacdReadings>
          <Drawer aria-label="展开">
            <svg width="18" height="30" viewBox="0 0 18 30" fill="none" stroke="#fff" strokeWidth="4" strokeLinecap="round"><path d="M15 3L3 15L15 27" /></svg>
          </Drawer>
        </MacdBar>

        <Plot $height={248} $line="#ccc">
          <MacdChart />
          <MacdScale>
            <span>30.84</span>
            <span>−12.67</span>
          </MacdScale>
        </Plot>

        <TimeAxis>
          <Ticks><Tick /><Tick /><Tick /></Ticks>
          <AxisLabel $align="flex-start">
            <span>20240925 14:37</span>
            <AxisFade>26</AxisFade>
            <span>10:32</span>
          </AxisLabel>
          <AxisLabel $align="flex-end">13:31</AxisLabel>
          <AxisLabel $align="flex-end">15:00</AxisLabel>
        </TimeAxis>

        <SectionTabs>
          {sections.map((s, i) => <SectionTab key={s} $active={i === 0}>{s}</SectionTab>)}
        </SectionTabs>

        <Posts>
          <PostCount>共有530906条帖子</PostCount>
          <Peek><PeekBack /><PeekCard /></Peek>
        </Posts>

        <ActionBar>
          <IndexTicker>
            <IndexHead>
              <Caret size={20} up />
              3000.95
            </IndexHead>
            <IndexRow><IndexName>上证</IndexName>3.61%</IndexRow>
          </IndexTicker>
          <Action>
            <svg width="62" height="64" viewBox="0 0 62 64" fill="none" stroke="currentColor" strokeWidth="3">
              <rect x="2" y="3" width="58" height="50" rx="5" />
              <path d="M9 61H53" />
              <path d="M13 37L24 25L32 34L48 18M38 19L49 17L47 26" />
            </svg>
            买指数
          </Action>
          <Action>
            <svg width="62" height="64" viewBox="0 0 62 64" fill="none" stroke="currentColor" strokeWidth="3">
              <path d="M42 7H11Q5 7 5 13V53Q5 59 11 59H51Q57 59 57 53V22" />
              <path d="M26 38L48 15M51 12L56 7" strokeWidth="6" />
              <path d="M23 41L26 34L30 38Z" fill="currentColor" />
            </svg>
            发帖
          </Action>
          <Action>
            <svg width="62" height="64" viewBox="0 0 62 64" fill="none" stroke="currentColor" strokeWidth="3">
              <rect x="6" y="8" width="22" height="22" rx="3" />
              <rect x="6" y="35" width="22" height="22" rx="3" />
              <rect x="33" y="35" width="22" height="22" rx="3" />
              <rect x="35" y="10" width="18" height="18" rx="2" transform="rotate(45 44 19)" />
            </svg>
            功能
          </Action>
          <Action $accent>
            <svg width="62" height="64" viewBox="0 0 62 64" fill="none" stroke="currentColor" strokeWidth="3">
              <circle cx="31" cy="33" r="27" />
              <path d="M18 33H44M31 20V46" />
            </svg>
            加自选
          </Action>
        </ActionBar>

        <SystemBar>
          <IconButton aria-label="系统返回">
            <svg width="48" height="54" viewBox="0 0 48 54" fill="none" stroke="#888" strokeWidth="4" strokeLinejoin="round"><path d="M44 4V50L5 27Z" /></svg>
          </IconButton>
          <IconButton aria-label="主屏幕">
            <svg width="54" height="54" viewBox="0 0 54 54" fill="none" stroke="#888" strokeWidth="4"><circle cx="27" cy="27" r="23" /></svg>
          </IconButton>
          <IconButton aria-label="最近任务">
            <svg width="48" height="50" viewBox="0 0 48 50" fill="none" stroke="#888" strokeWidth="4"><rect x="3" y="4" width="42" height="42" rx="2" /></svg>
          </IconButton>
          <Smudge width="300" height="50" viewBox="0 0 300 50" fill="none">
            <defs>
              <linearGradient id="streak"><stop offset="0" stopColor="#bbb" /><stop offset=".3" stopColor="#ddd" /><stop offset=".7" stopColor="#ddd" /><stop offset="1" stopColor="#555" /></linearGradient>
              <linearGradient id="drip" x1="0" y1="0" x2="0" y2="1"><stop offset="0" stopColor="#111" stopOpacity="0" /><stop offset="1" stopColor="#111" /></linearGradient>
              <filter id="soft"><feGaussianBlur stdDeviation="1.500" /></filter>
            </defs>
            <rect x="14" y="13" width="274" height="3" fill="url(#streak)" filter="url(#soft)" />
            <rect x="90" y="20" width="198" height="3" fill="url(#streak)" opacity=".4" filter="url(#soft)" />
            <path d="M82 0V28Q90 32 98 28V0" stroke="url(#drip)" strokeWidth="4" filter="url(#soft)" />
            <path d="M81 28Q90 32 99 28M289 2V10L294 8M288 26L294 14M287 22L294 28" stroke="#222" strokeWidth="2" />
          </Smudge>
        </SystemBar>
      </Page>
    </>
  );
}
